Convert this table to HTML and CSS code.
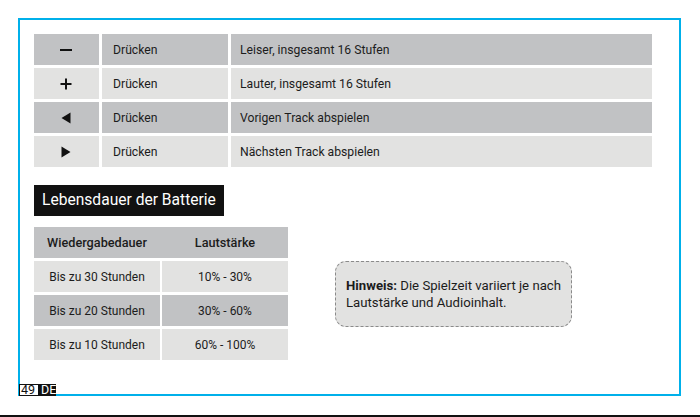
FILE: index.html
```html
<!DOCTYPE html>
<html lang="de">
<head>
<meta charset="utf-8">
<title>Bedienung</title>
<link rel="stylesheet" href="styles.css">
</head>
<body>
<div class="frame">
  <div class="controls">
    <div class="row row-dark">
      <div class="cell icon"><svg width="14" height="14" viewBox="0 0 14 14"><rect x="1" y="6" width="12" height="2" fill="#111"/></svg></div>
      <div class="cell">Drücken</div>
      <div class="cell desc">Leiser, insgesamt 16 Stufen</div>
    </div>
    <div class="row row-light">
      <div class="cell icon"><svg width="14" height="14" viewBox="0 0 14 14"><rect x="1.5" y="6" width="11" height="2" fill="#111"/><rect x="6" y="1.5" width="2" height="11" fill="#111"/></svg></div>
      <div class="cell">Drücken</div>
      <div class="cell desc">Lauter, insgesamt 16 Stufen</div>
    </div>
    <div class="row row-dark">
      <div class="cell icon"><svg width="10" height="12" viewBox="0 0 10 12"><polygon points="9.5,0.5 0.5,6 9.5,11.5" fill="#111"/></svg></div>
      <div class="cell">Drücken</div>
      <div class="cell desc">Vorigen Track abspielen</div>
    </div>
    <div class="row row-light">
      <div class="cell icon"><svg width="10" height="12" viewBox="0 0 10 12"><polygon points="0.5,0.5 9.5,6 0.5,11.5" fill="#111"/></svg></div>
      <div class="cell">Drücken</div>
      <div class="cell desc">Nächsten Track abspielen</div>
    </div>
  </div>

  <h2 class="heading">Lebensdauer der Batterie</h2>

  <div class="battery">
    <div class="btable">
      <div class="brow head">
        <div class="bcell">Wiedergabedauer</div>
        <div class="bcell">Lautstärke</div>
      </div>
      <div class="brow">
        <div class="bcell light">Bis zu 30 Stunden</div>
        <div class="bcell light">10% - 30%</div>
      </div>
      <div class="brow">
        <div class="bcell dark">Bis zu 20 Stunden</div>
        <div class="bcell dark">30% - 60%</div>
      </div>
      <div class="brow">
        <div class="bcell light">Bis zu 10 Stunden</div>
        <div class="bcell light">60% - 100%</div>
      </div>
    </div>
    <div class="note"><p class="note-text"><strong>Hinweis:</strong> Die Spielzeit variiert je nach Lautstärke und Audioinhalt.</p></div>
  </div>
</div>
<div class="pagelabel"><span class="num">49</span><span class="lang">DE</span></div>
<div class="bottomrule"></div>
</body>
</html>
```

FILE: styles.css
```css
* { box-sizing: border-box; }
html, body { margin: 0; padding: 0; background: #fff; }
body {
  font-family: Roboto, "Noto Sans", Arial, sans-serif;
  color: #1c1c1c;
  width: 700px;
  height: 417px;
  position: relative;
  overflow: hidden;
}
.frame {
  margin: 18px 0 0 18px;
  width: 663px;
  height: 378px;
  border: 2px solid #00b0ea;
  padding: 14px 27px 0 14px;
}
.controls {
  display: flex;
  flex-direction: column;
  gap: 3px;
}
.row {
  display: grid;
  grid-template-columns: 65px 126px 1fr;
  column-gap: 3px;
  height: 31px;
}
.cell {
  display: flex;
  align-items: center;
  padding-left: 11px;
  font-size: 12.2px;
}
.cell.desc { padding-left: 9px; }
.cell.icon { justify-content: center; padding-left: 0; padding-right: 1px; }
.row-dark .cell { background: #c1c2c4; }
.row-light .cell { background: #e2e2e1; }
.dark { background: #c1c2c4; }
.light { background: #e2e2e1; }

.heading {
  display: inline-block;
  margin: 18px 0 0;
  height: 31px;
  line-height: 31px;
  padding: 0 8px;
  background: #111;
  color: #fff;
  font-size: 15.6px;
  font-weight: 400;
}
.battery {
  display: flex;
  align-items: center;
  gap: 47px;
  margin-top: 11px;
}
.btable {
  display: flex;
  flex-direction: column;
  gap: 3px;
  width: 254px;
}
.brow {
  display: grid;
  grid-template-columns: 126px 126px;
  column-gap: 2px;
  height: 31px;
}
.brow.head { background: #c1c2c4; }
.bcell {
  display: flex;
  align-items: center;
  justify-content: center;
  font-size: 12px;
}
.brow.head .bcell { font-weight: 500; font-size: 12.7px; }
.note {
  width: 237px;
  height: 66px;
  border: 1px dashed #8a8a8a;
  border-radius: 11px;
  background: #e2e2e1;
  padding: 0 6px 0 10px;
  display: flex;
  align-items: center;
}
.note-text {
  margin: 0;
  font-size: 13.2px;
  line-height: 17px;
}
.note-text strong { font-weight: 700; }
.pagelabel {
  position: absolute;
  left: 19px;
  top: 384px;
  display: flex;
  height: 12px;
  font-size: 12.5px;
  line-height: 12px;
}
.pagelabel .num {
  background: #fff;
  border: 1px solid #111;
  padding: 0 1px;
  color: #111;
  width: 20px;
  height: 12px;
  line-height: 10px;
}
.pagelabel .lang {
  background: #111;
  color: #fff;
  padding: 0 2px;
  width: 17px;
  height: 12px;
}
.bottomrule {
  margin-top: 19px;
  height: 2px;
  background: #111;
}
```
